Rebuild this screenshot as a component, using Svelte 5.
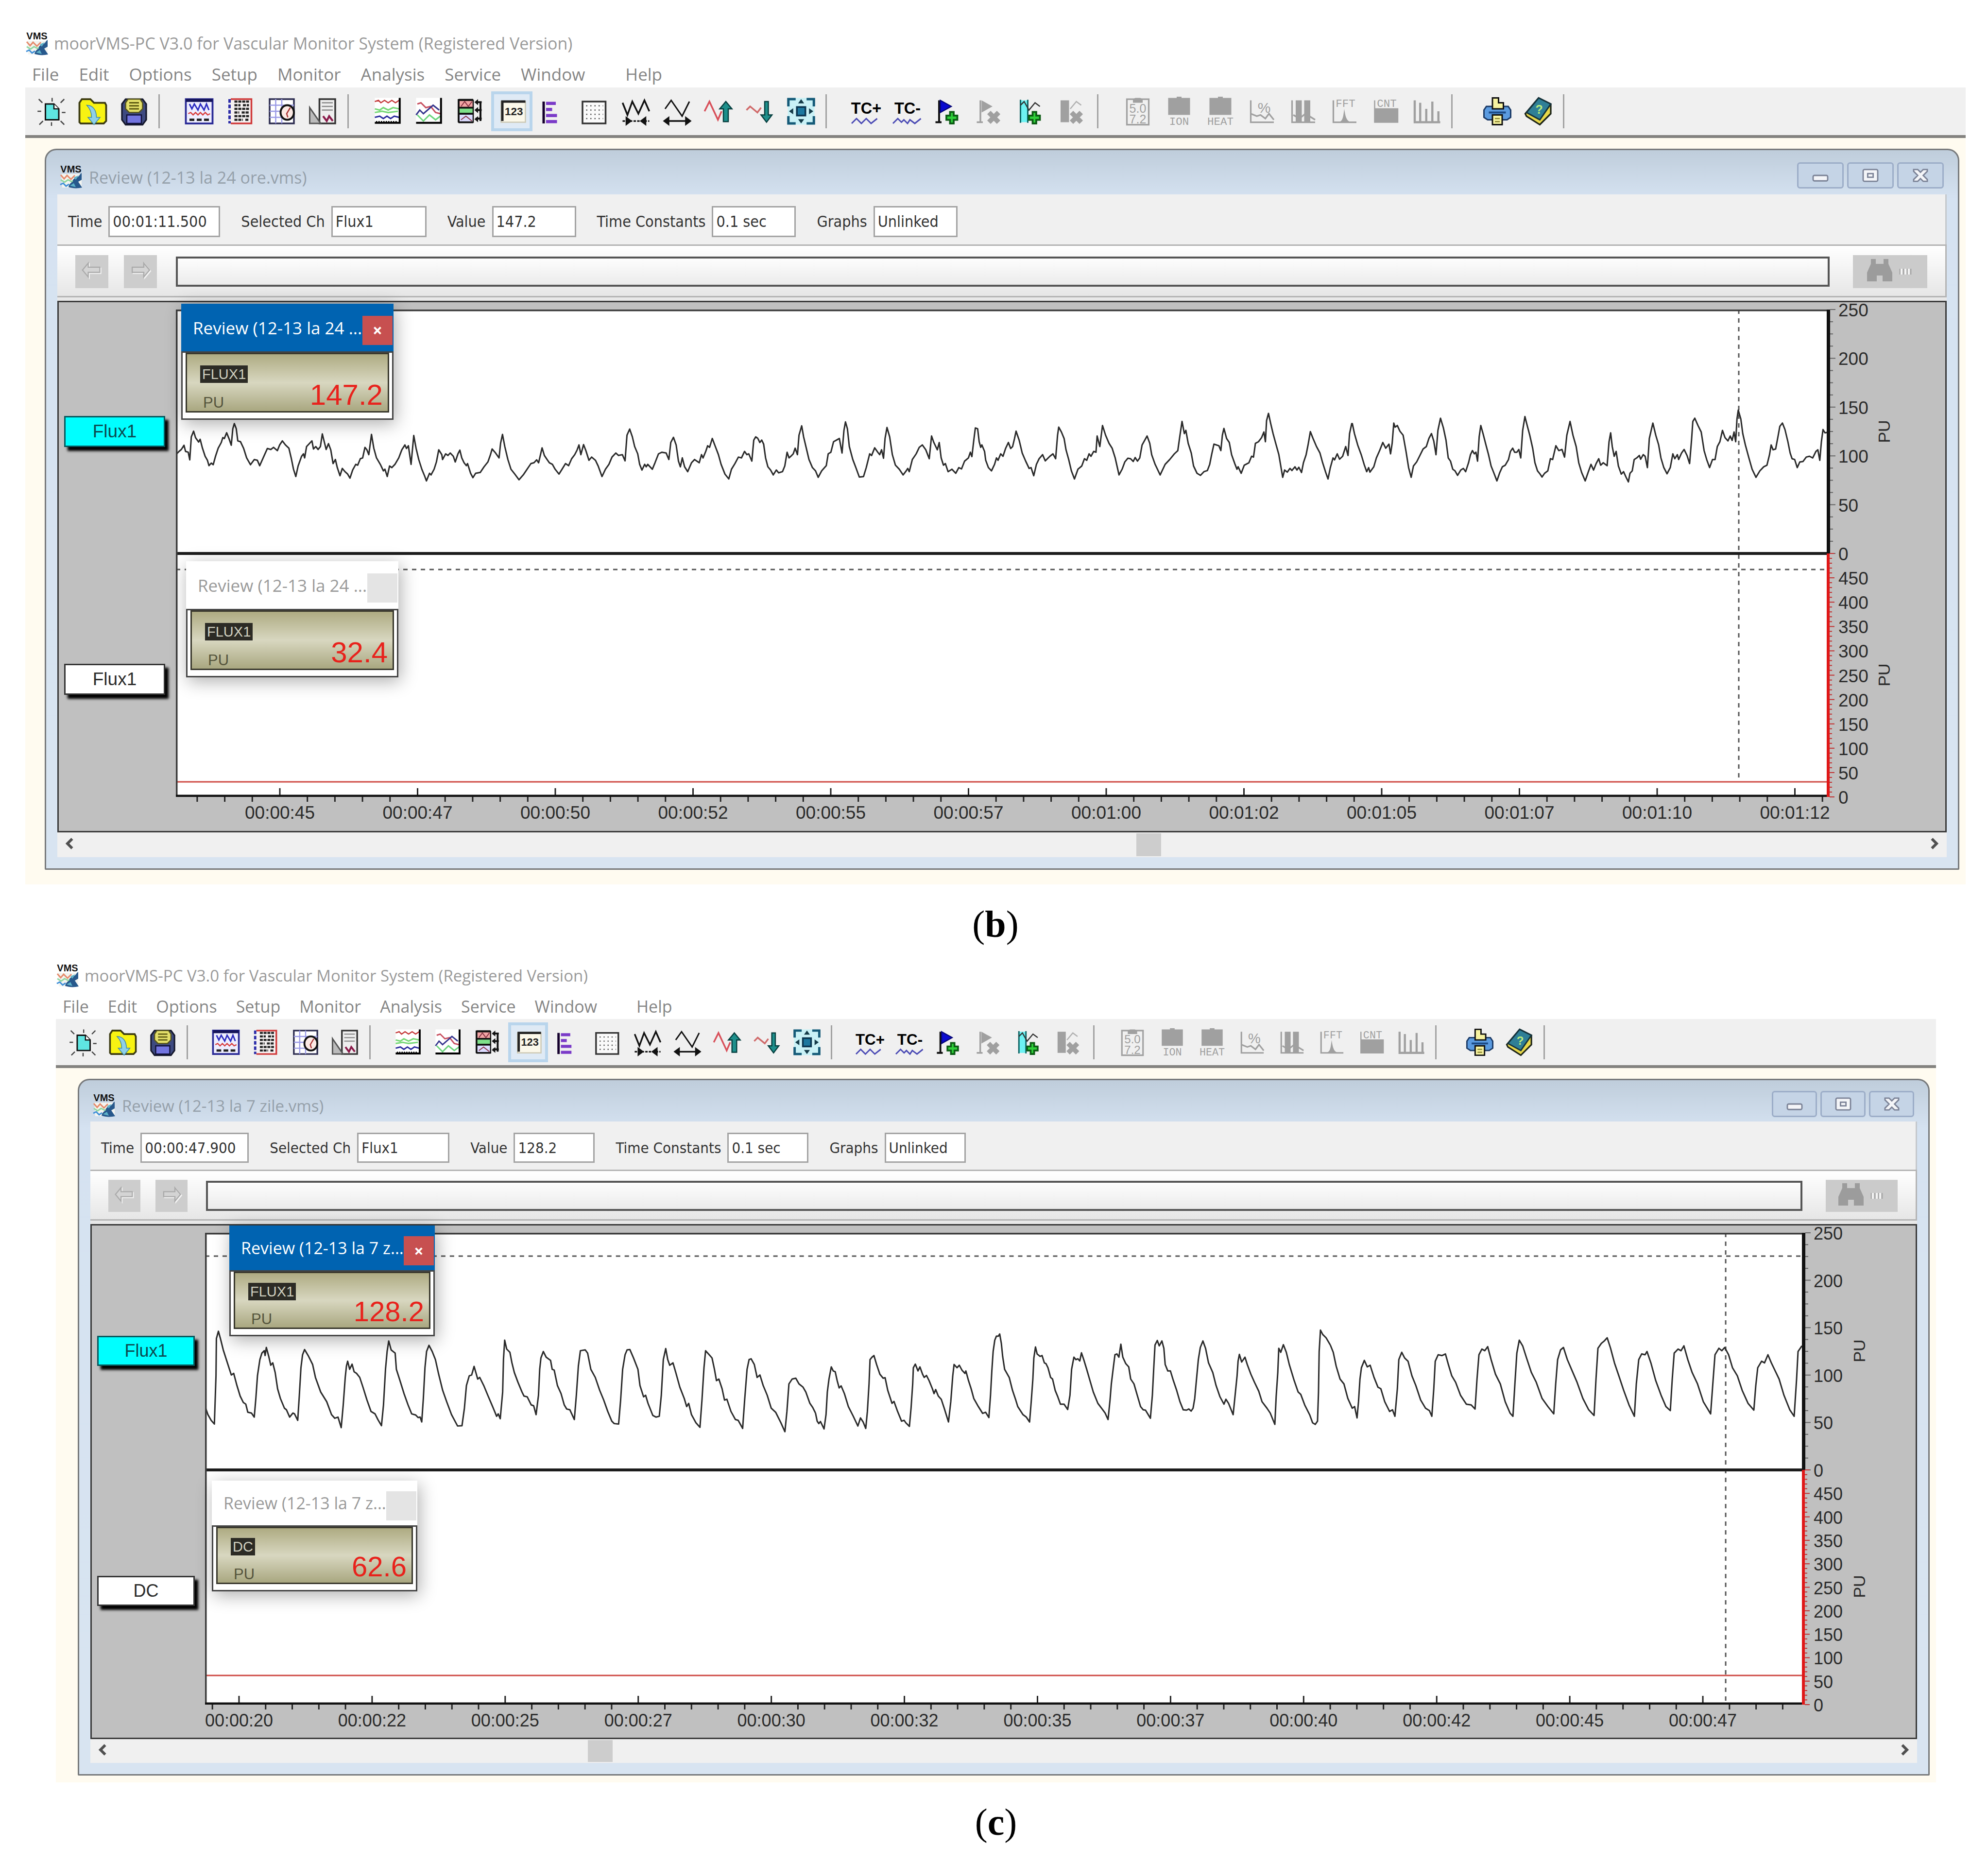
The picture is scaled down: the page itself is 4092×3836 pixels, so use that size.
<script>
	const menu = ['File', 'Edit', 'Options', 'Setup', 'Monitor', 'Analysis', 'Service', 'Window', 'Help'];

	const toolbar = [
		['new', 'open', 'save'],
		['display', 'list', 'clock', 'report'],
		['split', 'overlay', 'arrange', 'digits', 'bars', 'grid', 'compress', 'expand', 'scaleup', 'scaledown', 'fit'],
		['tcplus', 'tcminus', 'flagadd', 'flagdel', 'regionadd', 'regiondel'],
		['values', 'ion', 'heat', 'percent', 'blocks', 'fft', 'cnt', 'histogram'],
		['print', 'help']
	];
	const disabled = ['flagdel', 'regiondel', ...toolbar[4]];

	const panels = [
		{
			id: 'b',
			file: '12-13 la 24 ore.vms',
			fields: [
				{ label: 'Time', value: '00:01:11.500', size: 'wide' },
				{ label: 'Selected Ch', value: 'Flux1', size: 'medium' },
				{ label: 'Value', value: '147.2', size: 'small' },
				{ label: 'Time Constants', value: '0.1 sec', size: 'small' },
				{ label: 'Graphs', value: 'Unlinked', size: 'small' }
			],
			channels: ['Flux1', 'Flux1'],
			meters: [
				{ title: 'Review (12-13 la 24 ...', name: 'FLUX1', value: '147.2', active: true },
				{ title: 'Review (12-13 la 24 ...', name: 'FLUX1', value: '32.4', active: false }
			],
			times: ['00:00:45', '00:00:47', '00:00:50', '00:00:52', '00:00:55', '00:00:57', '00:01:00', '00:01:02', '00:01:05', '00:01:07', '00:01:10', '00:01:12'],
			plot: { width: 3398, height: 1003, zero: 502, cursorX: 3217, cursorY: 535, cursorEnd: 972, red: 972, tickStart: 214, tickStep: 283.5 },
			scroll: 57.3,
			trace: [
				{
					x: -22, y: 182, sx: 0.7908,
					points: '30,345 36,330 42,318 49,292 53,330 60,335 64,382 68,240 74,205 79,245 87,272 91,255 97,310 104,360 110,385 114,418 120,402 125,412 131,360 138,310 146,275 150,245 154,250 160,215 166,250 172,292 176,190 180,158 185,190 189,265 196,270 204,310 212,370 222,412 232,380 240,385 246,418 255,370 266,312 275,318 282,305 292,325 298,290 305,265 313,290 322,310 328,370 334,440 340,485 346,420 355,360 360,345 363,370 368,300 376,280 382,265 386,315 392,300 398,318 404,300 409,222 414,270 419,318 425,282 431,320 437,405 443,380 448,430 455,480 461,435 468,455 475,470 481,495 488,445 496,410 501,415 508,375 514,370 520,305 525,320 530,350 537,225 543,310 550,370 560,410 568,450 572,440 578,485 584,420 590,430 598,410 608,370 616,320 624,290 628,312 633,295 640,410 647,232 653,310 660,380 668,440 675,480 680,512 688,465 692,475 700,440 706,395 712,320 720,350 722,380 730,345 736,355 742,340 750,360 755,395 762,345 767,322 772,370 778,400 784,418 787,405 795,465 801,492 808,465 820,460 830,425 840,395 846,355 851,315 860,340 869,370 873,280 878,225 884,300 892,380 900,440 910,470 921,505 932,475 942,440 952,405 960,400 967,382 972,400 981,308 987,355 994,380 1000,400 1008,410 1015,440 1025,470 1033,440 1042,405 1050,418 1058,375 1066,350 1072,322 1077,290 1082,350 1089,288 1095,325 1103,385 1110,365 1120,385 1127,420 1137,485 1146,440 1155,410 1163,365 1173,340 1180,355 1190,350 1197,388 1202,230 1209,192 1216,240 1222,300 1230,345 1235,410 1241,445 1248,410 1252,425 1256,410 1268,440 1275,400 1284,345 1293,335 1304,340 1311,380 1316,275 1323,243 1330,290 1336,390 1341,425 1346,370 1352,425 1360,455 1370,400 1378,380 1390,400 1396,350 1400,370 1407,330 1412,295 1417,305 1424,250 1432,300 1440,350 1447,410 1457,470 1467,500 1474,440 1483,405 1492,365 1500,370 1508,330 1514,350 1519,345 1527,390 1532,260 1537,240 1543,250'
				},
				{
					x: 1198, y: 182, sx: 0.7908,
					points: '0,250 5,275 10,260 15,285 20,370 26,425 33,445 40,475 48,445 54,462 64,455 70,420 76,335 81,370 88,355 92,345 97,310 103,350 107,230 114,172 119,240 127,320 133,380 142,430 150,450 157,490 166,450 178,418 183,345 190,335 197,270 203,262 212,250 219,340 224,200 228,148 233,190 238,300 247,380 255,430 264,488 275,485 282,430 291,345 296,355 304,308 312,335 317,350 322,320 327,372 331,250 336,182 343,240 350,350 358,415 368,440 378,475 386,450 390,435 394,455 402,380 412,345 420,305 428,290 437,320 446,375 452,235 458,275 467,320 472,275 477,370 483,415 488,405 495,455 505,440 515,465 523,430 530,438 538,390 548,370 553,335 557,362 562,260 566,185 572,190 576,270 580,305 583,290 590,330 593,385 600,430 608,450 616,410 621,370 625,385 632,345 638,360 645,310 652,275 658,312 663,300 668,250 672,205 680,260 688,340 697,390 706,435 711,430 718,480 725,410 732,375 741,350 748,388 760,360 768,345 775,375 780,230 783,180 790,210 797,250 802,320 809,380 816,450 824,500 833,440 843,420 850,375 856,385 862,345 867,360 874,330 880,335 883,235 890,300 897,170 905,230 914,280 922,310 930,370 940,475 948,440 955,395 963,372 970,375 977,392 982,368 988,390 994,370 1000,290 1006,265 1013,235 1020,280 1025,350 1034,410 1047,475 1060,410 1072,380 1084,345 1093,325 1098,240 1104,145 1110,220 1114,200 1120,280 1128,340 1134,420 1143,465 1152,478 1161,455 1170,448 1176,410 1181,350 1187,285 1200,295 1205,325 1209,230 1213,188 1220,250 1227,275 1233,350 1242,410 1247,440 1250,425 1258,465 1266,415 1278,400 1285,360 1290,365 1295,280 1303,270 1311,245 1317,210 1321,270 1324,140 1329,95 1335,160 1341,220 1349,290 1356,350 1361,420 1366,490 1371,445 1378,458 1385,435 1390,448 1398,425 1403,445 1408,428 1415,460 1420,400 1427,350 1432,290 1438,208 1445,250 1454,300 1463,340 1470,400 1478,460 1484,500 1490,430 1497,370 1501,382 1508,345 1514,378 1522,360 1530,300 1536,355 1540,220 1546,155'
				},
				{
					x: 2418, y: 182, sx: 0.6633,
					points: '5,155 12,220 22,290 33,350 42,410 50,455 56,430 60,458 72,425 80,370 90,325 100,275 109,310 119,285 124,345 129,280 134,155 138,180 145,170 153,205 163,230 172,330 180,430 188,490 195,420 205,395 215,355 225,315 235,300 243,250 251,220 258,265 265,350 271,200 279,125 288,185 296,260 303,370 310,390 317,440 324,450 332,478 342,445 350,435 357,455 366,400 372,350 378,325 384,345 389,335 394,390 399,240 404,170 411,220 420,290 428,350 436,420 445,465 454,512 463,460 471,425 480,415 490,380 496,330 503,310 509,335 516,335 522,318 528,370 534,200 541,115 548,170 556,230 565,310 572,400 580,450 588,470 594,488 602,465 612,450 620,375 627,380 637,295 646,325 656,318 664,365 671,230 681,145 690,230 700,300 708,400 717,460 728,512 737,460 746,410 754,445 762,405 770,375 776,415 784,400 796,418 802,270 807,215 812,300 818,360 824,330 831,420 840,470 847,455 855,490 862,518 867,465 874,450 880,380 888,370 896,355 900,378 908,350 914,360 921,430 927,250 938,155 947,230 956,290 963,370 972,430 982,468 992,430 1000,345 1006,375 1014,350 1018,380 1027,340 1035,318 1044,355 1052,405 1058,260 1062,145 1068,125 1078,170 1088,210 1097,325 1105,380 1114,430 1123,380 1131,380 1138,300 1146,270 1154,200 1162,245 1171,265 1178,235 1184,262 1190,210 1195,270 1199,130 1203,75 1211,130 1217,220 1225,290 1236,370 1246,440 1258,490 1270,450 1282,425 1292,415 1300,350 1305,290 1311,320 1319,315 1327,230 1332,175 1340,155 1348,195 1357,270 1364,340 1370,375 1378,380 1386,430 1394,395 1404,392 1414,365 1424,360 1434,370 1444,330 1450,320 1456,385 1461,270 1466,195 1472,215 1480,212'
				}
			]
		},
		{
			id: 'c',
			file: '12-13 la 7 zile.vms',
			fields: [
				{ label: 'Time', value: '00:00:47.900', size: 'wide' },
				{ label: 'Selected Ch', value: 'Flux1', size: 'medium' },
				{ label: 'Value', value: '128.2', size: 'small' },
				{ label: 'Time Constants', value: '0.1 sec', size: 'small' },
				{ label: 'Graphs', value: 'Unlinked', size: 'small' }
			],
			channels: ['Flux1', 'DC'],
			meters: [
				{ title: 'Review (12-13 la 7 z...', name: 'FLUX1', value: '128.2', active: true },
				{ title: 'Review (12-13 la 7 z...', name: 'DC', value: '62.6', active: false }
			],
			times: ['00:00:20', '00:00:22', '00:00:25', '00:00:27', '00:00:30', '00:00:32', '00:00:35', '00:00:37', '00:00:40', '00:00:42', '00:00:45', '00:00:47'],
			plot: { width: 3288, height: 971, zero: 488, cursorX: 3131, cursorY: 48, cursorEnd: 971, red: 911, tickStart: 70, tickStep: 274 },
			scroll: 26.6,
			trace: [
				{
					x: -23, y: -39, sx: 0.829,
					points: '28,1190 35,1240 43,1275 51,1298 55,1000 56,770 61,725 66,770 73,840 82,910 93,995 99,985 107,1060 115,1125 123,1165 129,1175 134,1225 143,1230 150,1255 154,1140 158,1000 164,900 169,860 175,845 177,875 180,825 186,880 191,935 196,920 202,980 208,1080 215,1140 225,1200 230,1210 238,1255 246,1230 250,1235 258,1275 262,1120 266,950 270,870 275,838 285,880 295,930 302,1010 315,1100 330,1160 342,1240 350,1262 358,1255 366,1320 371,1180 376,1010 379,940 382,910 387,960 393,928 398,975 404,985 412,1010 420,1070 430,1150 440,1220 450,1235 457,1270 466,1308 471,1180 476,960 480,850 484,785 490,840 495,850 500,860 503,960 512,1030 522,1110 532,1180 541,1235 551,1242 557,1258 562,1255 566,1285 570,1140 574,950 578,850 584,812 592,850 600,900 608,990 618,1090 628,1160 640,1240 655,1310 666,1308 672,1200 677,1060 684,1000 690,995 696,942 701,985 705,1020 710,1010 720,1060 730,1120 742,1190 752,1250 756,1235 761,1265 767,1100 769,900 772,780 777,835 785,855 790,920 796,980 805,1040 815,1100 820,1125 828,1130 838,1180 844,1185 850,1240 856,1120 859,960 862,890 868,850 875,885 886,905 890,960 895,965 903,1060 912,1110 920,1180 926,1205 934,1210 945,1270 950,1120 955,940 960,845 972,840 978,860 986,960 997,1010 1008,1090 1018,1150 1028,1220 1038,1280 1044,1295 1055,1298 1060,1150 1065,960 1071,870 1076,840 1083,838 1092,890 1103,960 1108,1060 1117,1130 1122,1120 1128,1170 1140,1245 1148,1255 1156,1250 1161,1120 1166,900 1172,832 1177,900 1182,935 1190,920 1197,980 1207,1070 1218,1140 1224,1190 1229,1170 1236,1240 1247,1290 1257,1318 1262,1150 1267,950 1271,845 1280,870 1287,890 1293,960 1298,1030 1304,1020 1312,1080 1318,1150 1324,1145 1334,1220 1345,1270 1352,1275 1363,1325 1368,1150 1374,960 1379,900 1384,895 1392,930 1399,1010 1406,995 1414,1060 1424,1120 1434,1200 1445,1225 1458,1290 1468,1345 1473,1220 1478,1050 1486,1020 1495,1015 1503,1050 1513,1070 1520,1100 1530,1170 1537,1195 1544,1230'
				},
				{
					x: 1257, y: 161, sx: 0.676,
					points: '0,630 5,680 10,695 15,682 26,728 32,640 36,500 41,420 48,345 54,370 60,375 66,430 72,475 78,462 88,510 100,590 115,650 129,710 137,660 145,685 153,725 158,620 163,450 166,300 172,285 178,275 186,330 196,390 206,415 212,412 220,490 233,570 239,558 250,620 262,680 270,675 275,690 286,712 291,600 296,450 298,350 304,328 312,370 318,345 326,390 331,410 338,398 346,430 356,480 361,510 366,485 374,525 383,545 392,600 405,685 412,560 418,400 422,330 431,350 438,335 446,365 455,385 458,370 466,430 474,480 482,540 496,590 509,632 518,625 528,658 533,520 537,370 541,250 546,180 551,155 557,155 561,142 566,200 570,280 576,360 590,410 600,490 610,550 616,590 632,640 642,655 652,685 657,560 662,420 665,290 670,222 675,265 684,280 690,275 697,320 702,325 708,350 716,410 722,420 730,490 738,530 746,575 757,575 768,608 775,520 780,360 787,285 793,300 799,295 805,308 810,258 817,300 826,360 836,430 846,500 860,570 873,605 882,630 891,670 897,550 901,450 907,350 912,270 918,265 924,285 930,205 936,285 945,325 954,345 960,420 970,450 980,520 990,590 998,610 1005,612 1020,662 1026,520 1030,360 1034,210 1041,182 1047,215 1055,185 1061,230 1065,330 1073,370 1081,370 1090,430 1100,490 1110,560 1120,610 1130,612 1137,605 1144,618 1150,600 1155,540 1160,430 1166,300 1172,225 1180,185 1188,230 1197,320 1210,380 1220,460 1232,530 1244,575 1250,545 1258,570 1272,640 1278,520 1284,400 1287,310 1291,268 1298,315 1308,285 1315,330 1326,390 1337,440 1350,495 1360,560 1375,600 1385,630 1399,700 1403,530 1408,380 1411,230 1417,255 1425,208 1434,255 1443,330 1458,430 1470,500 1478,515 1490,580 1505,640 1514,690 1522,700 1529,680 1532,500 1534,250 1538,118 1545,145 1555,165 1568,210'
				},
				{
					x: 2317, y: 161, sx: 1,
					points: '0,210 6,255 12,340 20,420 28,450 36,540 45,600 50,590 55,660 58,560 61,420 64,350 70,305 76,345 82,335 90,410 98,470 104,480 112,560 122,620 128,610 133,650 138,480 141,300 147,255 153,290 160,310 168,400 176,460 186,550 196,600 204,615 209,650 213,480 216,310 222,270 230,275 237,265 243,330 250,400 258,440 268,520 280,575 290,580 298,605 302,420 306,270 312,235 318,245 324,220 331,300 340,390 350,450 360,560 370,630 376,650 380,450 384,260 389,180 396,215 404,290 414,380 424,440 436,540 448,590 460,635 464,450 468,300 474,240 480,225 488,300 498,370 508,440 520,540 532,610 543,645 547,420 551,230 558,200 564,185 570,165 577,230 585,320 594,400 604,490 615,580 626,650 630,450 635,300 641,265 648,270 652,250 660,320 670,430 681,520 691,590 700,615 704,420 708,260 716,235 722,245 728,215 736,300 745,380 756,450 768,560 776,600 783,635 788,430 792,270 800,230 806,245 812,225 820,270 828,350 838,400 848,490 860,570 872,612 876,460 880,350 888,310 894,320 901,270 908,320 916,370 924,420 934,520 946,610 955,650 960,420 963,250 971,215'
				}
			]
		}
	];

	const upperScale = [250, 200, 150, 100, 50, 0];
	const lowerScale = [450, 400, 350, 300, 250, 200, 150, 100, 50, 0];

	function labels(plot) {
		const lower = plot.height - plot.zero;
		return [
			...upperScale.map((v) => ({ v, top: ((plot.zero * (1 - v / 250)) / plot.height) * 100 })),
			...lowerScale.map((v) => ({ v, top: ((plot.zero + lower * (1 - v / 500)) / plot.height) * 100 }))
		];
	}

	function ticks(plot) {
		const step = plot.tickStep / 5;
		const list = [];
		for (let i = -5; i < 65; i++) {
			const x = plot.tickStart + i * step;
			if (x > 5 && x < plot.width) list.push({ x, major: i % 5 === 0 });
		}
		return list;
	}
</script>

{#snippet logo()}
	<svg class="logo" viewBox="0 0 48 50" aria-hidden="true">
		<path d="M4 20h42v28H6z" fill="#f3f4f0" />
		<path d="M3 22l7 8 6-7 8 8 8-8" fill="none" stroke="#e58a6a" stroke-width="3" />
		<path d="M3 32l8 5 7-5 8 4 8-6" fill="none" stroke="#8fd6a0" stroke-width="3" />
		<path d="M2 42l6-3 6 6 6-4" fill="none" stroke="#3f8fd8" stroke-width="3" />
		<path d="M46 18c-4 2-5 8-10 9-5 2-9 4-8 9-5 2-8 6-9 11 9 3 19 3 28 1l-8-12 7-4z" fill="#27588c" />
		<path d="M30 27l10-4-6 9zM22 44l8-5 4 8z" fill="#5fb3c9" />
		<text x="24" y="17" class="logo-text">VMS</text>
	</svg>
{/snippet}

{#snippet icon(name)}
	<svg class="icon" viewBox="0 0 24 24" fill="none" stroke="#111" stroke-width="1" aria-hidden="true">
		{#if name === 'new'}
			<path d="M7 6h7l4 4v9H7z" fill="#5fe6e2" stroke-width="1.2" />
			<path d="M14 6v4h4" fill="#fff" />
			<path d="M12.500 1v3M12 21v3M1.500 2l3 3M22.500 2l-3 3M0.500 12h3M20.500 13h3M2 23l3-3M22.500 23l-3-3" stroke="#444" />
		{:else if name === 'open'}
			<path d="M1 21V5l2-3h7l3 3h9l1 2v13l-2 2H2z" fill="#f8f312" stroke="#3c3b12" stroke-width="1.500" />
			<path d="M7 7c5 0 8 4 8 10h3l-5 6-5-6h3c0-4-1-7-4-10z" fill="#8fd0e8" stroke="#3c86a8" stroke-width=".6" />
		{:else if name === 'save'}
			<path d="M2 6l3-4h14l3 4v13l-3 4H5l-3-4z" fill="#3e4a80" stroke="#15182c" stroke-width="1.300" />
			<path d="M7 2h10l2 3v5l-3 3H8l-3-3V5z" fill="#e4e06a" stroke="#55531c" />
			<path d="M8 5h8M8 7.500h8M8 10h8" stroke="#5d5a12" stroke-width="1.200" />
			<path d="M6 15h12v7H6z" fill="#7274e0" stroke="#101038" />
		{:else if name === 'display'}
			<path d="M1 2h22v20H1z" fill="#eef" stroke="#2a2a96" stroke-width="1.500" />
			<path d="M1 3h22" stroke="#15155a" stroke-width="2.500" />
			<path d="M4 6l2 4 2-4 3 5 2-5 3 5 2-5 2 5" stroke="#2d2dc0" stroke-width="1.200" />
			<path d="M3 14l2-1 2 2 2-2 2 2 2-2 2 2 2-2 2 2 2-1" stroke="#d84040" />
			<path d="M4 19h4M10 19h4M16 19h4" stroke="#222" stroke-width="2" />
		{:else if name === 'list'}
			<path d="M4 2h17v20H4" fill="#f6f2f2" stroke="#d03a3a" stroke-width="1.400" />
			<path d="M3 2v20" stroke="#2b2ba8" stroke-width="2" stroke-dasharray="3 1.500" />
			<path d="M7 4h12M7 7h5M14 7h5M7 10h12M7 13h4M13 13h6M7 16h12M7 19h7M16 19h3" stroke="#222" stroke-width="1.800" stroke-dasharray="2.500 .7" />
		{:else if name === 'clock'}
			<path d="M2 2h20v20H2z" fill="#fff" stroke="#2d2d50" stroke-width="1.400" />
			<path d="M7 2v20M12 2v20M2 7h20M2 12h10M2 17h12" stroke="#9a9ae6" />
			<ellipse cx="16.500" cy="13" rx="5.500" ry="6" fill="#fbe9e4" stroke="#111" stroke-width="1.600" />
			<path d="M19 9l-3 5 1 3" stroke="#a33" />
		{:else if name === 'report'}
			<path d="M9 2h13v20H9z" fill="#eee" stroke="#333" stroke-width="1.400" />
			<path d="M11 5h9M11 8h9M11 11h9" stroke="#888" />
			<path d="M12 16l3 4 2-4 3 4" stroke="#8a1a4a" stroke-width="1.600" />
			<path d="M1 9v13h9z" fill="#bbb" stroke="#555" stroke-width="1.200" />
		{:else if name === 'split'}
			<path d="M1 1h20v21H1z" fill="#fff" stroke="none" />
			<path d="M1 4l3-1 2 2 3-2 3 2 3-2 3 2 3-2" stroke="#c43838" />
			<path d="M1 10l4 1 3-2 4 2 4-2 5 1M1 13l6-1 5 1 8-1" stroke="#78d878" stroke-width="1.300" />
			<path d="M1 17l4-1 3 2 3-2 3 2 3-2 4 1" stroke="#28289c" stroke-width="1.200" />
			<path d="M21.500 1v20.500H1" stroke="#000" stroke-width="1.600" />
			<path d="M2 20.500h18" stroke="#000" stroke-dasharray="1 1" />
		{:else if name === 'overlay'}
			<path d="M1 1h20v21H1z" fill="#fff" stroke="none" />
			<path d="M2 6l3-1 4 4 4-1 4 5 4 1" stroke="#c85060" stroke-width="1.200" />
			<path d="M1 15l3-4 3 3 8-7 5 4" stroke="#36368e" stroke-width="1.200" />
			<path d="M2 15l5 5 5-5 5 4 4-3" stroke="#6ad47a" stroke-width="1.200" />
			<path d="M21.500 1v20.500H1" stroke="#000" stroke-width="1.600" />
		{:else if name === 'arrange'}
			<path d="M2 3h12v6H2z" fill="#f2a5a5" /><path d="M2 9h12v5H2z" fill="#7fe08a" />
			<path d="M2 14h12v7H2z" fill="#dcdcff" />
			<path d="M2 2.500h12M2 9h12M2 14h12M2 21h12M2 2v19" stroke-width="1.500" />
			<path d="M4 8l3-4 3 4 3-4M4 19l4-3 5 4" stroke="#834" stroke-width=".8" />
			<path d="M20 4v16M16 4.500h5M16 11h5M16 18h5" stroke-width="1.600" />
			<path d="M15 4.500l3-2.500v5zM15 11l3-2.500v5zM15 18.500l3-2.500v5z" fill="#111" stroke="none" />
		{:else if name === 'digits'}
			<path d="M3 4h20v17H3z" fill="#fbf8ea" stroke="#ccc8b4" />
			<path d="M4 20V4h19" stroke="#222" stroke-width="2" />
			<text x="13.500" y="15" class="tiny bold" font-size="9">123</text>
		{:else if name === 'bars'}
			<path d="M4 4v18" stroke="#14002c" stroke-width="2" />
			<path d="M6 5.500h8M6 10.500h5M6 15.500h9M6 20.500h9" stroke="#7a3ac8" stroke-width="2.600" />
		{:else if name === 'grid'}
			<path d="M2 4h19v18H2z" fill="#fafafa" stroke="#333" stroke-width="1.400" />
			<path d="M5 7.500h14M5 11h14M5 14.500h14M5 18h14" stroke="#555" stroke-dasharray="1 2.400" />
		{:else if name === 'compress'}
			<path d="M1 5l4 10 4-11 5 10 5-11 4 9" stroke-width="1.400" />
			<path d="M1 20h22" stroke-dasharray="2 1" stroke-width="1.300" />
			<path d="M4 17l4 3-4 3zM20 17l-4 3 4 3z" fill="#111" />
		{:else if name === 'expand'}
			<path d="M2 10l5-7 9 13 6-12" stroke-width="1.200" />
			<path d="M2 20h20" stroke-width="1.400" />
			<path d="M1 20l4-3v6zM23 20l-4-3v6z" fill="#111" />
		{:else if name === 'scaleup'}
			<path d="M0.500 12l4-8 7 15 3-7" stroke="#d8505a" stroke-width="1.400" />
			<path d="M16 20.500V10h-3l5-6 5 6h-3v10.500z" fill="#1d8f8b" stroke="#063f3f" />
		{:else if name === 'scaledown'}
			<path d="M1 11l3-3 6 5 3-4" stroke="#d06a6a" stroke-width="1.400" />
			<path d="M16 4h3v11h3l-4.500 6-4.500-6h3z" fill="#1d8f8b" stroke="#063f3f" />
		{:else if name === 'fit'}
			<path d="M1 1h22v22H1z" fill="#c9f1f6" stroke="none" />
			<path d="M1.500 8V2h6M16.500 2h6v6M22.500 16v6h-6M7.500 22h-6v-6" stroke="#155a78" stroke-width="2" />
			<path d="M8.500 8.500h7v7h-7z" fill="#1c78a0" stroke="#0a3550" stroke-width="1.400" />
			<path d="M12 2l2.500 3.500h-5zM12 22l2.500-3.500h-5zM2 12l3.500-2.500v5zM22 12l-3.500-2.500v5z" fill="#143a48" stroke="none" />
		{:else if name === 'tcplus'}
			<text x="12" y="14" class="tiny bold black" font-size="13">TC+</text>
			<path d="M0 22l4-4 4 4 4-4 4 4 5-4" stroke="#4a4ab4" stroke-width="1.200" />
		{:else if name === 'tcminus'}
			<text x="12" y="14" class="tiny bold black" font-size="13">TC-</text>
			<path d="M0 22l4-4 3 3 2-2 3 3 2-3 4 3 5-4" stroke="#4a4ab4" stroke-width="1.200" />
		{:else if name === 'flagadd'}
			<path d="M4 3v18M1 21h5" stroke-width="1.600" />
			<path d="M5 3l9 5-9 5z" fill="#0a0ad0" stroke="#06067a" />
			<path d="M13 12.500h3v3h3v3.500h-3v3h-3v-3h-3v-3.500h3z" fill="#2fd03a" stroke="#0c5c14" stroke-width="1.500" />
		{:else if name === 'flagdel'}
			<path d="M4 3v18M1 21h5" stroke="#a0a0a0" stroke-width="1.400" />
			<path d="M5 3l9 5-9 5z" fill="#a0a0a0" stroke="none" />
			<path d="M11 13l8 8M19 13l-8 8" stroke="#a0a0a0" stroke-width="4" />
		{:else if name === 'regionadd'}
			<path d="M3 3h6v18H3z" fill="#6df2f2" stroke="none" />
			<path d="M3 2.500v19M9 2.500v19" stroke="#0e6464" stroke-width="1.200" />
			<path d="M3 7l3-3 4 7 5-6 4 3" stroke="#333" />
			<path d="M13 12.500h3v3h3v3.500h-3v3h-3v-3h-3v-3.500h3z" fill="#2fd03a" stroke="#0c5c14" stroke-width="1.500" />
		{:else if name === 'regiondel'}
			<path d="M2 3h7v18H2z" fill="#a0a0a0" stroke="none" />
			<path d="M10 10l5-6 4 3" stroke="#b0b0b0" />
			<path d="M11 13l8 8M19 13l-8 8" stroke="#a0a0a0" stroke-width="4" />
		{:else if name === 'values'}
			<path d="M3 2h18v21H3z" stroke="#a0a0a0" stroke-width="1.300" />
			<path d="M8 2l2-1h4l2 1v3H8z" fill="#a0a0a0" stroke="none" />
			<text x="12" y="13" class="tiny gray" font-size="10">5.0</text>
			<text x="12" y="22" class="tiny gray" font-size="10">7.2</text>
		{:else if name === 'ion' || name === 'heat'}
			<path d="M3 1h7V0h4v1h7v14H3z" fill="#a0a0a0" stroke="none" />
			<text x="12" y="23" class="tiny gray mono" font-size="9">{name === 'ion' ? 'ION' : 'HEAT'}</text>
		{:else if name === 'percent'}
			<path d="M3 3v18h19M3 14l5 2 3-1 4 3 3-4 4 5" stroke="#a0a0a0" stroke-width="1.300" />
			<text x="14" y="13" class="tiny gray" font-size="12">%</text>
		{:else if name === 'blocks'}
			<path d="M3 3v18h19M4 15l5 3 5-4 8 5" stroke="#a0a0a0" stroke-width="1.300" />
			<path d="M6 3h5v18H6zM13 3h5v18h-5z" fill="#a0a0a0" stroke="none" />
		{:else if name === 'fft'}
			<path d="M3 3v18h19" stroke="#a0a0a0" stroke-width="1.300" />
			<path d="M6 21c5 0 5-4 6-11 1 7 2 11 7 11z" fill="#a0a0a0" stroke="none" />
			<text x="13" y="8.500" class="tiny gray mono" font-size="9">FFT</text>
		{:else if name === 'cnt'}
			<path d="M3 3v18M3 10h19v11H3z" fill="#a0a0a0" stroke="#a0a0a0" />
			<text x="13" y="8.500" class="tiny gray mono" font-size="9">CNT</text>
		{:else if name === 'histogram'}
			<path d="M2 3v18h21M6.500 5v16M11.500 10v11M16.500 4v17M21.500 12v9" stroke="#a0a0a0" stroke-width="1.800" />
		{:else if name === 'print'}
			<path d="M3 8h18l2 3v6l-3 2H4l-3-2v-6z" fill="#5b9be0" stroke="#1b3a66" stroke-width="1.200" />
			<path d="M8 10V1h5v4h4v5z" fill="#f7f3a0" stroke-width="1.200" />
			<path d="M5 13h14" stroke="#1b4a86" stroke-width="1.600" />
			<path d="M8 15h8v8H8z" fill="#f7f3a0" stroke-width="1.200" />
			<path d="M10 18h4M10 20.500h4" stroke="#8a8430" />
		{:else if name === 'help'}
			<path d="M1 14L12 1l10 5v8L13 23 2 16z" fill="#e8d84a" stroke="#1c2418" stroke-width="1.300" />
			<path d="M2 13L12 1l10 5-9 13z" fill="#2f7f96" stroke="#14323c" stroke-width="1.200" />
			<text x="12.500" y="14" class="tiny bold question" font-size="10">?</text>
		{/if}
	</svg>
{/snippet}

{#snippet meter(m, index)}
	<section class="meter meter-{index}" class:active={m.active}>
		<header>
			<span>{m.title}</span>
			<button aria-label="Close meter">{m.active ? '×' : ''}</button>
		</header>
		<div class="meter-body">
			<div class="lcd">
				<b>{m.name}</b>
				<i>PU</i>
				<output>{m.value}</output>
			</div>
		</div>
	</section>
{/snippet}

<main>
	{#each panels as panel}
		<figure class="panel panel-{panel.id}">
			<div class="app">
				<header class="app-title">
					{@render logo()}
					<span>moorVMS-PC V3.0 for Vascular Monitor System (Registered Version)</span>
				</header>

				<nav class="menu">
					{#each menu as item}
						<a href="#{item}">{item}</a>
					{/each}
				</nav>

				<div class="toolbar" role="toolbar" aria-label="Tools">
					{#each toolbar as group}
						<div class="group">
							{#each group as name}
								<button class="tool" class:pressed={name === 'digits'} disabled={disabled.includes(name)} aria-label={name}>
									{@render icon(name)}
								</button>
							{/each}
						</div>
					{/each}
				</div>

				<div class="desktop">
					<section class="window">
						<header class="window-title">
							{@render logo()}
							<span>Review ({panel.file})</span>
							<div class="window-buttons">
								<button aria-label="Minimize">
									<svg viewBox="0 0 40 32"><rect x="4" y="16" width="32" height="12" rx="3" /></svg>
								</button>
								<button aria-label="Maximize">
									<svg viewBox="0 0 40 32"><rect x="4" y="3" width="32" height="26" rx="3" /><rect x="14" y="12" width="12" height="8" /></svg>
								</button>
								<button aria-label="Close">
									<svg viewBox="0 0 40 32"><path d="M5 3h9l6 6 6-6h9v4l-9 9 9 9v4h-9l-6-6-6 6H5v-4l9-9-9-9z" /></svg>
								</button>
							</div>
						</header>

						<form class="info">
							{#each panel.fields as field, i}
								<div class="field">
									<label for="{panel.id}-{i}">{field.label}</label>
									<input id="{panel.id}-{i}" class={field.size} value={field.value} readonly />
								</div>
							{/each}
						</form>

						<div class="search">
							<button class="step" disabled aria-label="Previous marker">
								<svg viewBox="0 0 40 40"><path d="M4 20L14 8v7h20v9H14v8z" /></svg>
							</button>
							<button class="step" disabled aria-label="Next marker">
								<svg viewBox="0 0 40 40"><path d="M36 20L26 8v7H6v9h20v8z" /></svg>
							</button>
							<input class="marker" aria-label="Marker" />
							<button class="find" disabled aria-label="Find">
								<svg viewBox="0 0 100 50">
									<path d="M10 2h10v10h16V2h10v10l8 18v18H34V36H22v12H2V30l8-18z" fill="#9c9c9c" />
									<path d="M70 22v12M77 22v12M85 22v12M92 22v12" stroke="#aaa" stroke-width="3" />
									<path d="M73 22v12M81 22v12M88 22v12" stroke="#f4f4f4" stroke-width="4" />
								</svg>
							</button>
						</div>

						<div class="chart">
							<div class="channels">
								{#each panel.channels as channel, i}
									<div class="channel">
										<button class:selected={i === 0}>{channel}</button>
									</div>
								{/each}
							</div>

							<svg class="plot" viewBox="0 0 {panel.plot.width} {panel.plot.height}" preserveAspectRatio="none" aria-label="Flux over time">
								<rect width={panel.plot.width} height={panel.plot.height} fill="#fff" />
								<line x1="0" x2={panel.plot.width} y1={panel.plot.cursorY} y2={panel.plot.cursorY} class="dash" />
								<line x1={panel.plot.cursorX} x2={panel.plot.cursorX} y1="0" y2={panel.plot.cursorEnd} class="dash" />
								{#each panel.trace as part}
									<polyline points={part.points} transform="translate({part.x} {part.y}) scale({part.sx} 0.3333)" class="wave" />
								{/each}
								<line x1="0" x2={panel.plot.width} y1={panel.plot.red} y2={panel.plot.red} stroke="#cf4a44" stroke-width="3" />
								{#each ticks(panel.plot).filter((t) => t.major) as t}
									<line x1={t.x} x2={t.x} y1={panel.plot.height - 18} y2={panel.plot.height} class="tick" />
								{/each}
								<line x1="0" x2={panel.plot.width} y1={panel.plot.zero} y2={panel.plot.zero} stroke="#1c1c1c" stroke-width="6" />
								<path d="M1 {panel.plot.height}V1H{panel.plot.width}" fill="none" stroke="#3c3c3c" stroke-width="5" />
								<line x1="0" x2={panel.plot.width} y1={panel.plot.height - 2} y2={panel.plot.height - 2} stroke="#111" stroke-width="5" />
							</svg>

							<div class="y-axis">
								<svg viewBox="0 0 20 {panel.plot.height}" preserveAspectRatio="none" aria-hidden="true">
									<rect width="7" height={panel.plot.zero} fill="#111" />
									<rect y={panel.plot.zero} width="6" height={panel.plot.height - panel.plot.zero} fill="#e01818" />
									{#each Array(21) as _, i}
										<rect x="7" y={(panel.plot.zero * i) / 20 - 1} width={i % 4 ? 6 : 11} height="2" fill="#666" />
									{/each}
									{#each Array(51) as _, i}
										<rect x="6" y={panel.plot.zero + ((panel.plot.height - panel.plot.zero) * i) / 50 - 1} width={i % 5 ? 5 : 10} height="2" fill="#c23030" />
									{/each}
								</svg>
								{#each labels(panel.plot) as label}
									<span class="y-label" style="top: {label.top}%">{label.v}</span>
								{/each}
								<span class="unit unit-top">PU</span>
								<span class="unit unit-bottom">PU</span>
							</div>

							<div class="x-axis">
								<svg viewBox="0 0 {panel.plot.width} 12" preserveAspectRatio="none" aria-hidden="true">
									{#each ticks(panel.plot).filter((t) => !t.major) as t}
										<line x1={t.x} x2={t.x} y1="0" y2="10" class="tick" />
									{/each}
								</svg>
								{#each panel.times as time, i}
									<span class="x-label" style="left: {((panel.plot.tickStart + i * panel.plot.tickStep) / panel.plot.width) * 100}%">{time}</span>
								{/each}
							</div>

							{#each panel.meters as m, i}
								{@render meter(m, i)}
							{/each}
						</div>

						<div class="scrollbar">
							<button aria-label="Scroll left"><svg viewBox="0 0 20 20"><path d="M14 3L7 10l7 7" /></svg></button>
							<div class="track"><div class="thumb" style="margin-left: {panel.scroll}%"></div></div>
							<button aria-label="Scroll right"><svg viewBox="0 0 20 20"><path d="M6 3l7 7-7 7" /></svg></button>
						</div>
					</section>
				</div>
			</div>
			<figcaption>(<b>{panel.id}</b>)</figcaption>
		</figure>
	{/each}
</main>

<style>
	:global(body) {
		margin: 0;
		background: #fff;
	}

	main {
		padding-top: 53px;
		font-family: "Open Sans", "Noto Sans", sans-serif;
	}

	.panel {
		--text: 34px;
		--menu: 35px;
		--menu-gap: 41px;
		--small: 32px;
		--axis: 37px;
		--lcd: 60px;
		--title-h: 71px;
		--menu-h: 56px;
		--toolbar-h: 98px;
		--tool: 85px;
		--icon: 60px;
		--sep: 49px;
		--win-title-h: 91px;
		--win-button: 96px;
		--bar-h: 103px;
		--field-h: 64px;
		--step: 68px;
		--find: 153px;
		--left: 241px;
		--right: 244px;
		--plot-h: 1003px;
		--x-axis-h: 70px;
		--chan-w: 208px;
		--chan-h: 64px;
		--meter-w: 437px;
		--meter-title-h: 98px;
		--meter-body-h: 141px;
		--scroll-h: 51px;
		margin: 0 46px 0 52px;
	}

	.panel-c {
		--text: 33px;
		--menu: 34px;
		--menu-gap: 39px;
		--small: 31px;
		--axis: 36px;
		--lcd: 58px;
		--title-h: 76px;
		--menu-h: 52px;
		--toolbar-h: 95px;
		--tool: 82px;
		--icon: 58px;
		--sep: 48px;
		--win-title-h: 85px;
		--win-button: 93px;
		--bar-h: 99px;
		--field-h: 62px;
		--step: 66px;
		--find: 148px;
		--left: 233px;
		--right: 234px;
		--plot-h: 971px;
		--x-axis-h: 68px;
		--chan-w: 201px;
		--chan-h: 62px;
		--meter-w: 423px;
		--meter-title-h: 92px;
		--meter-body-h: 136px;
		--scroll-h: 49px;
		margin: 0 107px 0 115px;
	}

	button {
		padding: 0;
		border: 0;
		background: none;
		font: inherit;
		color: inherit;
	}

	.logo {
		width: 48px;
		height: 50px;
		flex: none;
		overflow: visible;
	}

	.logo-text {
		font: bold 20px "Liberation Sans", Arial, sans-serif;
		text-anchor: middle;
		fill: #111;
	}

	.app-title {
		display: flex;
		align-items: center;
		gap: 11px;
		height: var(--title-h);
		font-size: var(--text);
		color: #9a9a9a;
	}

	.menu {
		display: flex;
		align-items: center;
		gap: var(--menu-gap);
		height: var(--menu-h);
		padding-left: 14px;
	}

	.menu a {
		font-size: var(--menu);
		color: #858585;
		text-decoration: none;
	}

	.menu a:last-child {
		margin-left: 42px;
	}

	.toolbar {
		display: flex;
		align-items: center;
		height: var(--toolbar-h);
		padding-left: 11px;
		background: #f0f0f0;
		border-bottom: 6px solid #83827f;
	}

	.panel-c .toolbar {
		padding-left: 15px;
	}

	.group {
		display: flex;
		align-items: center;
	}

	.group::after {
		content: '';
		width: 3px;
		height: 70px;
		margin-left: 8px;
		margin-right: calc(var(--sep) - 11px);
		background: #a2a2a2;
	}

	.group:nth-child(5)::after {
		margin-right: var(--sep);
	}

	.tool {
		display: flex;
		align-items: center;
		justify-content: center;
		width: var(--tool);
		height: 82px;
		box-sizing: border-box;
	}

	.pressed {
		background: #dfeaf5;
		border: 6px solid #b9d5ec;
	}

	.icon {
		width: var(--icon);
		height: var(--icon);
		flex: none;
		overflow: visible;
	}

	.tiny {
		font-family: "Liberation Sans", Arial, sans-serif;
		text-anchor: middle;
		stroke: none;
		fill: #222;
	}

	.bold {
		font-weight: bold;
	}

	.black {
		fill: #000;
	}

	.gray {
		fill: #a0a0a0;
	}

	.mono {
		font-family: "Liberation Mono", "Courier New", monospace;
	}

	.question {
		fill: #b8ec7c;
	}

	.desktop {
		padding: 22px 13px 30px 40px;
		background: #fffbf0;
	}

	.panel-c .desktop {
		padding-left: 45px;
		padding-bottom: 14px;
	}

	.window {
		padding: 0 23px 23px;
		border: 3px solid #77797b;
		border-radius: 24px 24px 2px 2px;
		background: linear-gradient(#bfcddb, #d5e2f1 100px, #d8e4f1);
	}

	.window-title {
		display: flex;
		align-items: center;
		gap: 13px;
		height: var(--win-title-h);
		padding: 12px 0 0 4px;
		box-sizing: border-box;
		font-size: var(--text);
		color: #95a0aa;
	}

	.window-title .logo {
		margin-top: 4px;
	}

	.window-title span {
		margin-top: 8px;
	}

	.window-buttons {
		display: flex;
		gap: 7px;
		margin-left: auto;
		margin-right: 6px;
	}

	.window-buttons button {
		display: flex;
		align-items: center;
		justify-content: center;
		width: var(--win-button);
		height: 54px;
		box-sizing: border-box;
		border: 3px solid #9cadc8;
		border-radius: 6px;
		background: #c5d4e6;
	}

	.window-buttons svg {
		width: 38px;
		height: 30px;
		fill: #f4f5f8;
		stroke: #7b8296;
		stroke-width: 3;
	}

	.info {
		display: flex;
		align-items: center;
		gap: 43px;
		height: var(--bar-h);
		padding-left: 22px;
		padding-top: 8px;
		box-sizing: border-box;
		background: #f0f0f0;
		border-right: 3px solid #c4c8cc;
	}

	.field {
		display: flex;
		align-items: center;
		gap: 13px;
	}

	.field label,
	.field input {
		font-family: "DejaVu Sans Condensed", Tahoma, sans-serif;
		font-size: var(--small);
		color: #333;
	}

	.field input {
		height: var(--field-h);
		padding: 0 6px;
		box-sizing: border-box;
		border: 3px solid #a3a3a3;
		background: #fff;
	}

	.wide {
		width: 230px;
	}

	.medium {
		width: 196px;
	}

	.small {
		width: 173px;
	}

	.panel-c .wide {
		width: 223px;
	}

	.panel-c .medium {
		width: 190px;
	}

	.panel-c .small {
		width: 167px;
	}

	.search {
		display: flex;
		align-items: center;
		height: calc(var(--bar-h) + 6px);
		padding: 2px 37px 0;
		box-sizing: border-box;
		border: 3px solid #b4b4b4;
		border-left: 0;
		background: linear-gradient(#fff, #e6e6e6);
		margin-bottom: 7px;
		box-shadow: 0 7px #e8e8e8;
	}

	.step {
		width: var(--step);
		height: var(--step);
		margin-right: 32px;
		background: #cdcdcd;
	}

	.panel-c .step {
		margin-right: 31px;
	}

	.step svg {
		width: 70%;
		fill: #d4d4d4;
		stroke: #aaa;
		stroke-width: 2;
		filter: drop-shadow(2px 2px #f4f4f4);
	}

	.marker {
		flex: 1;
		min-width: 0;
		height: 62px;
		margin-left: 7px;
		margin-right: 48px;
		box-sizing: border-box;
		border: 4px solid #555;
		background: linear-gradient(#fdfdfd, #ebebeb);
	}

	.find {
		width: var(--find);
		height: var(--step);
		background: #cbcbcb;
	}

	.find svg {
		width: 100px;
	}

	.chart {
		position: relative;
		display: grid;
		grid-template-columns: var(--left) 1fr var(--right);
		grid-template-rows: var(--plot-h) var(--x-axis-h);
		padding-top: 15px;
		border: 3px solid #3a3a3a;
		background: #c0c0c0;
		font-family: "Liberation Sans", Arial, sans-serif;
		font-size: var(--axis);
		color: #2b2b2b;
	}

	.channels {
		display: grid;
		grid-template-rows: 1fr 1fr;
	}

	.channel {
		display: flex;
		align-items: center;
		padding-left: 11px;
	}

	.channel + .channel {
		padding-top: 18px;
	}

	.channel button {
		width: var(--chan-w);
		height: var(--chan-h);
		border: 3px solid #333;
		background: #fff;
		box-shadow: 7px 8px 5px #000;
	}

	.channel .selected {
		background: #00ffff;
		border-color: #06585c;
		color: #0b4a50;
	}

	.plot {
		display: block;
		width: 100%;
		height: 100%;
	}

	.dash {
		stroke: #555;
		stroke-width: 3;
		stroke-dasharray: 9 9;
	}

	.wave {
		fill: none;
		stroke: #2a2a2a;
		stroke-width: 3;
		stroke-linejoin: round;
		vector-effect: non-scaling-stroke;
	}

	.tick {
		stroke: #222;
		stroke-width: 3;
	}

	.y-axis {
		position: relative;
	}

	.y-axis svg {
		display: block;
		width: 20px;
		height: 100%;
		overflow: visible;
	}

	.y-label {
		position: absolute;
		left: 24px;
		line-height: 40px;
		margin-top: -18px;
	}

	.unit {
		position: absolute;
		left: 98px;
		writing-mode: vertical-rl;
		transform: translateY(-50%) rotate(180deg);
		font-size: 34px;
		line-height: 40px;
	}

	.unit-top {
		top: 25%;
	}

	.unit-bottom {
		top: 75%;
	}

	.x-axis {
		position: relative;
		grid-column: 2;
	}

	.x-axis svg {
		display: block;
		width: 100%;
		height: 12px;
	}

	.x-label {
		position: absolute;
		top: 13px;
		line-height: 40px;
		transform: translateX(-50%);
		white-space: nowrap;
	}

	.meter {
		position: absolute;
		width: var(--meter-w);
		box-shadow: 4px 8px 34px rgba(0, 0, 0, 0.32);
	}

	.panel-b .meter-0 {
		left: 252px;
		top: 3px;
	}

	.panel-b .meter-1 {
		left: 262px;
		top: 533px;
	}

	.panel-c .meter-0 {
		left: 283px;
		top: 0;
	}

	.panel-c .meter-1 {
		left: 247px;
		top: 525px;
	}

	.meter header {
		display: flex;
		align-items: center;
		justify-content: space-between;
		height: var(--meter-title-h);
		padding-left: 24px;
		background: #fff;
		font-family: "Open Sans", "Noto Sans", sans-serif;
		font-size: var(--menu);
		white-space: nowrap;
		color: #9a9a9a;
	}

	.meter header button {
		width: 62px;
		height: 60px;
		margin-right: 2px;
		margin-top: 12px;
		background: #e4e4e4;
		font-weight: bold;
		line-height: 56px;
	}

	.active header {
		background: #0063b1;
		color: #fff;
	}

	.active header button {
		background: #c75050;
	}

	.meter-body {
		height: var(--meter-body-h);
		padding: 0 6px 12px;
		box-sizing: border-box;
		border: 3px solid #444;
		background: #fff;
	}

	.lcd {
		display: grid;
		grid-template-columns: auto 1fr;
		grid-template-rows: 1fr 1fr;
		height: 100%;
		padding: 0 10px 0 27px;
		box-sizing: border-box;
		border: 3px solid #38372c;
		background: linear-gradient(#aeab82, #d8d7c0 50%, #a9a780);
		line-height: 34px;
	}

	.lcd b {
		align-self: end;
		justify-self: start;
		padding: 0 4px;
		background: #2c2b25;
		color: #cfcfbf;
		font-weight: normal;
		font-size: 29px;
		line-height: 36px;
	}

	.lcd i {
		grid-row: 2;
		align-self: end;
		padding-left: 6px;
		font-style: normal;
		font-size: 31px;
		color: #55543c;
	}

	.lcd output {
		grid-column: 2;
		grid-row: 1 / 3;
		align-self: end;
		justify-self: end;
		font-size: var(--lcd);
		line-height: 66px;
		color: #e8221c;
	}

	.scrollbar {
		display: flex;
		height: var(--scroll-h);
		background: #f0f0f0;
	}

	.scrollbar button {
		width: 50px;
	}

	.scrollbar svg {
		width: 28px;
		fill: none;
		stroke: #505050;
		stroke-width: 4;
	}

	.track {
		flex: 1;
		padding: 2px 0;
	}

	.thumb {
		width: 51px;
		height: 100%;
		background: #cdcdcd;
	}

	figcaption {
		padding: 37px 0 22px;
		font-family: "Liberation Serif", "Times New Roman", serif;
		font-size: 78px;
		line-height: 90px;
		text-align: center;
	}
</style>
